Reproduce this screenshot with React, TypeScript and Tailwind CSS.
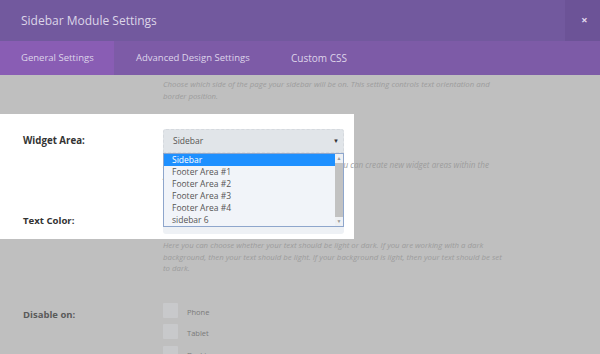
const font = { fontFamily: '"Open Sans", "Noto Sans", sans-serif' };

const widgetAreas = ['Sidebar', 'Footer Area #1', 'Footer Area #2', 'Footer Area #3', 'Footer Area #4', 'sidebar 6'];

export default function App() {
  return (
    <div className="w-[600px] h-[354px] overflow-hidden flex flex-col bg-[#bfbfbf]" style={font}>
      {/* modal header */}
      <div className="h-[41px] shrink-0 flex bg-[#72599e]">
        <div className="flex-1 flex items-center pl-[21px] text-[12px] text-[#dcd5e8]">Sidebar Module Settings</div>
        <div className="w-[35px] flex items-center justify-center pl-[4px] bg-[#6c5397] text-[#e4dcef] text-[11px] font-bold">×</div>
      </div>

      {/* tabs */}
      <div className="h-[34px] shrink-0 flex bg-[#7d5ba7] text-[9.5px] text-[#ddd4ea] whitespace-nowrap">
        <div className="w-[114px] flex items-center pl-[21px] bg-[#895db4]">General Settings</div>
        <div className="w-[177px] flex items-center pl-[22px]">Advanced Design Settings</div>
        <div className="flex items-center text-[10px]">Custom CSS</div>
      </div>

      {/* settings body */}
      <div className="flex-1 flex flex-col">
        <div className="shrink-0 pl-[163px] pt-[3px] h-[39px] text-[7.8px] leading-[12px] italic text-[#9c9c9c] whitespace-nowrap">
          <div>Choose which side of the page your sidebar will be on. This setting controls text orientation and</div>
          <div>border position.</div>
        </div>

        {/* highlighted block */}
        <div className="shrink-0 w-[354px] h-[125px] bg-white">
          <div className="flex pt-[15px]">
            <div className="w-[163px] pl-[23px] h-6 flex items-center text-[9.7px] font-bold text-[#333]">Widget Area:</div>
            <div className="relative w-[181px] h-6">
              <div className="absolute left-0 top-0 w-[181px] h-[105px] rounded-[3px] bg-[#eef1f5]" />
              <div className="relative h-6 flex items-center justify-between pl-[9px] pr-[4px] rounded-t-[3px] bg-[#e1e5e9] border border-dashed border-[#d5d9de] text-[8.5px] text-[#555]">
                <span>Sidebar</span>
                <span className="text-[6px] text-[#333]">▼</span>
              </div>
              <div className="absolute left-0 top-6 z-10 w-[181px] flex border border-[#8ea6cc] bg-[#f1f4f9] text-[8.5px] text-[#555]">
                <div className="flex-1 flex flex-col">
                  {widgetAreas.map((w, i) => (
                    <div
                      key={w}
                      className={i === 0 ? 'h-[12px] leading-[12px] pl-[8px] bg-[#1e90ff] text-white' : 'h-[12px] leading-[12px] pl-[8px]'}
                    >
                      {w}
                    </div>
                  ))}
                </div>
                <div className="w-[8px] flex flex-col bg-[#c2c2c2]">
                  <div className="h-[9px] flex items-center justify-center bg-[#eef0f3] text-[5px] text-[#999]">▲</div>
                  <div className="flex-1" />
                  <div className="h-[9px] flex items-center justify-center bg-[#eef0f3] text-[5px] text-[#999]">▼</div>
                </div>
              </div>
            </div>
          </div>
          <div className="pl-[163px] mt-[6px] whitespace-nowrap text-[8.1px] leading-[12px] italic text-[#9c9c9c]">
            <div>Select the widget area you would like to display. You can create new widget areas within the</div>
            <div>Appearances &gt; Widgets tab.</div>
          </div>
          <div className="pl-[23px] mt-[31px] h-[14px] flex items-center text-[9.6px] font-bold text-[#333]">Text Color:</div>
        </div>

        <div className="shrink-0 pl-[163px] pt-[1px] text-[7.8px] leading-[11.5px] italic text-[#9c9c9c] whitespace-nowrap">
          <div>Here you can choose whether your text should be light or dark. If you are working with a dark</div>
          <div>background, then your text should be light. If your background is light, then your text should be set</div>
          <div>to dark.</div>
        </div>

        <div className="shrink-0 flex mt-[28px]">
          <div className="w-[163px] pl-[23px] pt-[5px] text-[9.5px] font-bold text-[#5a5a5a]">Disable on:</div>
          <div className="flex flex-col gap-[6.5px]">
            {['Phone', 'Tablet', 'Desktop'].map((d) => (
              <div key={d} className="flex items-center gap-[9px] h-[15px]">
                <div className="w-[15px] h-[15px] bg-[#c8c9cb] rounded-[1px]" />
                <span className="mt-[5px] text-[7.5px] text-[#7a7a7a]">{d}</span>
              </div>
            ))}
          </div>
        </div>
      </div>
    </div>
  );
}
